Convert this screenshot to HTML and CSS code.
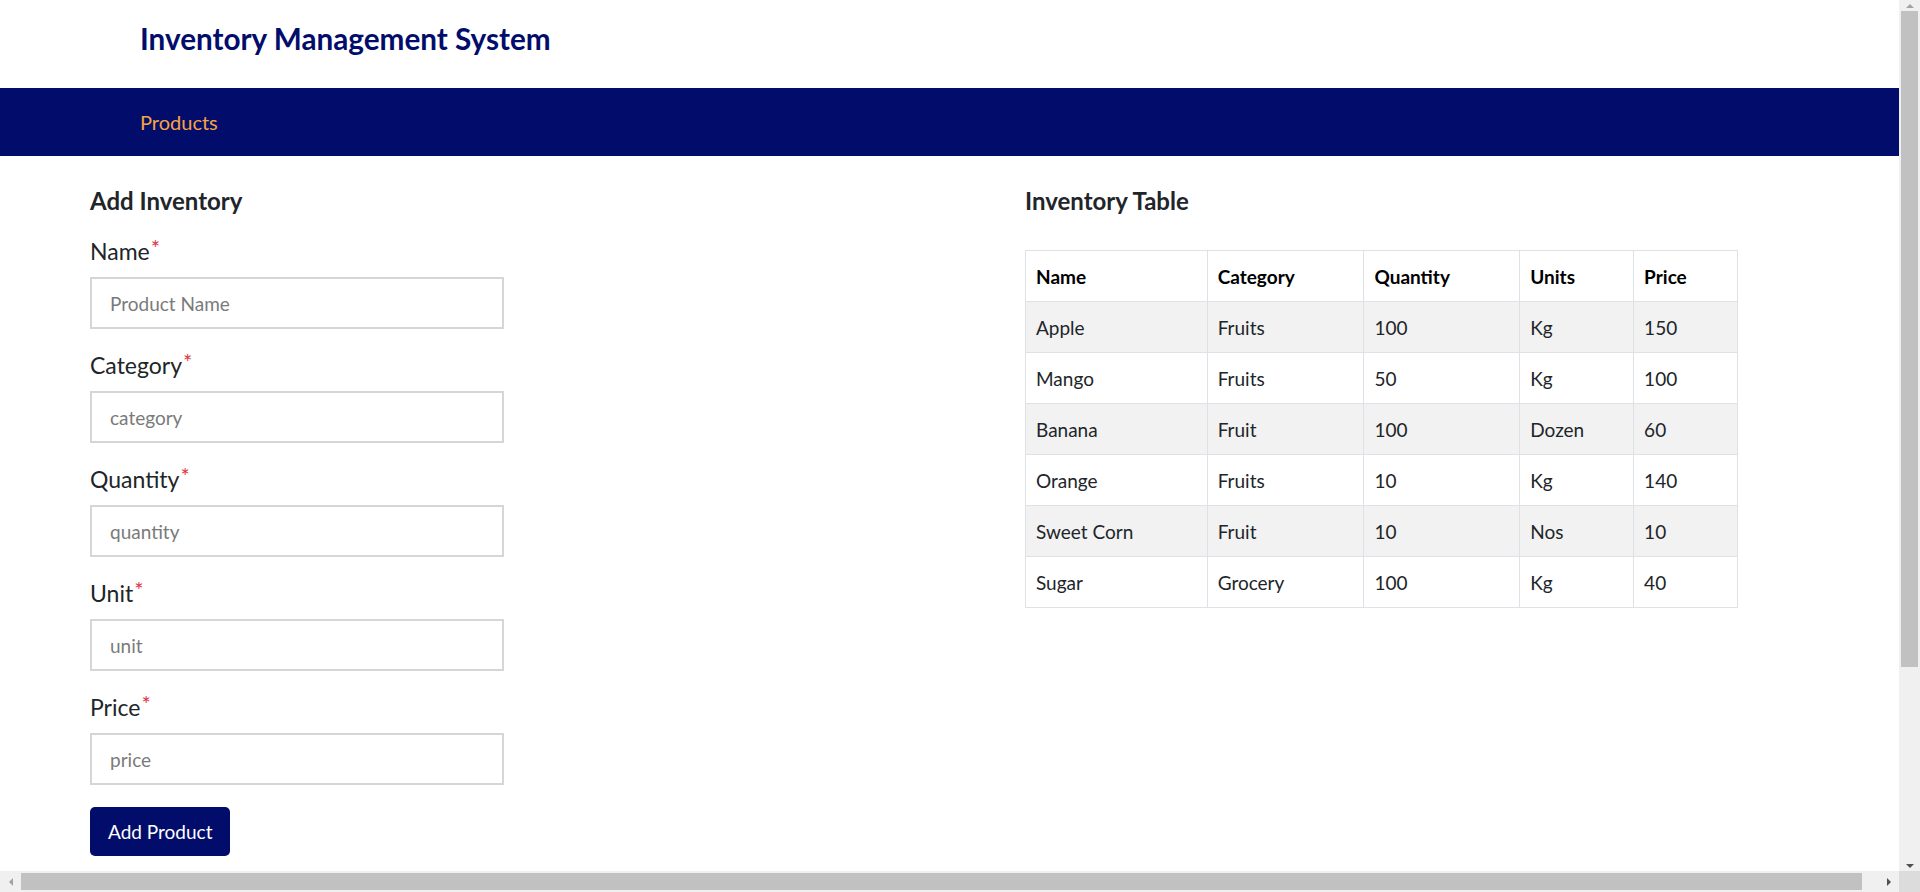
FILE: index.html
```html
<!DOCTYPE html>
<html lang="en">
<head>
<meta charset="utf-8">
<title>Inventory Management System</title>
<link rel="stylesheet" href="styles.css">
</head>
<body>
<header class="topbar">
  <div class="brand">Inventory Management System</div>
</header>
<nav class="navbar">
  <a class="nav-link" href="#">Products</a>
</nav>
<main class="main">
  <section class="form-col">
    <h2 class="section-title">Add Inventory</h2>
    <form class="inv-form">
      <div class="field">
        <label class="field-label">Name<span class="req">*</span></label>
        <input class="field-input" type="text" placeholder="Product Name">
      </div>
      <div class="field">
        <label class="field-label">Category<span class="req">*</span></label>
        <input class="field-input" type="text" placeholder="category">
      </div>
      <div class="field">
        <label class="field-label">Quantity<span class="req">*</span></label>
        <input class="field-input" type="text" placeholder="quantity">
      </div>
      <div class="field">
        <label class="field-label">Unit<span class="req">*</span></label>
        <input class="field-input" type="text" placeholder="unit">
      </div>
      <div class="field">
        <label class="field-label">Price<span class="req">*</span></label>
        <input class="field-input" type="text" placeholder="price">
      </div>
      <button class="btn-add" type="button">Add Product</button>
    </form>
  </section>
  <section class="table-col">
    <h2 class="section-title">Inventory Table</h2>
    <table class="inv-table">
      <thead>
        <tr><th class="c-name">Name</th><th class="c-cat">Category</th><th class="c-qty">Quantity</th><th class="c-unit">Units</th><th class="c-price">Price</th></tr>
      </thead>
      <tbody>
        <tr><td>Apple</td><td>Fruits</td><td>100</td><td>Kg</td><td>150</td></tr>
        <tr><td>Mango</td><td>Fruits</td><td>50</td><td>Kg</td><td>100</td></tr>
        <tr><td>Banana</td><td>Fruit</td><td>100</td><td>Dozen</td><td>60</td></tr>
        <tr><td>Orange</td><td>Fruits</td><td>10</td><td>Kg</td><td>140</td></tr>
        <tr><td>Sweet Corn</td><td>Fruit</td><td>10</td><td>Nos</td><td>10</td></tr>
        <tr><td>Sugar</td><td>Grocery</td><td>100</td><td>Kg</td><td>40</td></tr>
      </tbody>
    </table>
  </section>
</main>
<div class="sb sb-v" aria-hidden="true">
  <span class="sb-btn"><span class="tri tri-up"></span></span>
  <span class="sb-thumb"></span>
  <span class="sb-btn sb-end"><span class="tri tri-down"></span></span>
</div>
<div class="sb sb-h" aria-hidden="true">
  <span class="sb-btn"><span class="tri tri-left"></span></span>
  <span class="sb-thumb"></span>
  <span class="sb-btn sb-end"><span class="tri tri-right"></span></span>
</div>
<div class="sb-corner" aria-hidden="true"></div>
</body>
</html>
```
FILE: styles.css
```css
html, body {
  margin: 0;
  padding: 0;
}
body {
  font-family: Lato, "Noto Sans", sans-serif;
  color: #212529;
  background: #fff;
}
.topbar {
  height: 88px;
  box-sizing: border-box;
  padding: 21px 0 0 140px;
}
.brand {
  font-size: 29.7px;
  line-height: 36px;
  font-weight: 700;
  color: #020d6b;
}
.navbar {
  height: 68px;
  background: #020d6b;
  display: flex;
  align-items: center;
  padding-left: 140px;
}
.nav-link {
  color: #f7a33e;
  text-decoration: none;
  font-size: 20px;
  line-height: 30px;
}
.main {
  display: grid;
  grid-template-columns: 935px 1fr;
  padding: 30px 0 0 90px;
}
.section-title {
  margin: 0 0 17px;
  font-size: 24px;
  line-height: 30px;
  font-weight: 700;
  color: #212529;
}
.inv-form {
  display: flex;
  flex-direction: column;
  align-items: flex-start;
}
.field {
  display: flex;
  flex-direction: column;
  margin-bottom: 18px;
}
.field-label {
  font-size: 23px;
  line-height: 36px;
  margin-bottom: 8px;
}
.req {
  color: #dc3545;
  font-size: 22px;
  vertical-align: top;
  line-height: 30px;
  margin-left: 1px;
}
.field-input {
  width: 414px;
  height: 52px;
  box-sizing: border-box;
  border: 2px solid #d6d6d6;
  border-radius: 0;
  padding: 0 18px;
  font-family: inherit;
  font-size: 19px;
  color: #212529;
  outline: none;
}
.field-input::placeholder {
  color: #7a7a7a;
}
.btn-add {
  margin-top: 4px;
  height: 49px;
  padding: 0 18px;
  background: #020d6b;
  color: #fff;
  border: none;
  border-radius: 5px;
  font-family: inherit;
  font-size: 19px;
}
.inv-table {
  border-collapse: collapse;
  width: 713px;
  margin-top: 34px;
  font-size: 19px;
}
.inv-table th,
.inv-table td {
  border: 1px solid #dee2e6;
  height: 51px;
  box-sizing: border-box;
  padding: 0 10px;
  text-align: left;
  vertical-align: middle;
  color: #000;
}
.inv-table td {
  color: #212529;
}
.inv-table th {
  font-weight: 700;
}
.inv-table tbody tr:nth-child(odd) {
  background: #f2f2f2;
}
.c-name { width: 182px; }
.c-cat { width: 157px; }
.c-qty { width: 156px; }
.c-unit { width: 114px; }
.c-price { width: 104px; }

/* browser scrollbars (overlay) */
.sb {
  position: fixed;
  background: #f0f0f0;
  display: flex;
  align-items: center;
}
.sb-v {
  top: 0;
  right: 0;
  width: 21px;
  height: 871px;
  flex-direction: column;
}
.sb-h {
  left: 0;
  bottom: 0;
  width: 1899px;
  height: 21px;
}
.sb-btn {
  display: flex;
  align-items: center;
  justify-content: center;
  flex: none;
}
.sb-v .sb-btn {
  width: 21px;
  height: 11px;
}
.sb-h .sb-btn {
  width: 21px;
  height: 21px;
}
.sb-end {
  margin-left: auto;
  margin-top: auto;
}
.sb-h .sb-end {
  margin-top: 0;
}
.sb-v .sb-end {
  margin-left: 0;
}
.sb-thumb {
  background: #c1c1c1;
  flex: none;
}
.sb-v .sb-thumb {
  width: 17px;
  height: 656px;
}
.sb-h .sb-thumb {
  width: 1841px;
  height: 17px;
}
.tri {
  width: 0;
  height: 0;
}
.tri-up {
  border-left: 4px solid transparent;
  border-right: 4px solid transparent;
  border-bottom: 4px solid #a3a3a3;
}
.tri-down {
  border-left: 4px solid transparent;
  border-right: 4px solid transparent;
  border-top: 4px solid #505050;
}
.tri-left {
  border-top: 4px solid transparent;
  border-bottom: 4px solid transparent;
  border-right: 4px solid #a3a3a3;
}
.tri-right {
  border-top: 4px solid transparent;
  border-bottom: 4px solid transparent;
  border-left: 4px solid #505050;
}
.sb-corner {
  position: fixed;
  right: 0;
  bottom: 0;
  width: 21px;
  height: 21px;
  background: #dcdcdc;
}
```
